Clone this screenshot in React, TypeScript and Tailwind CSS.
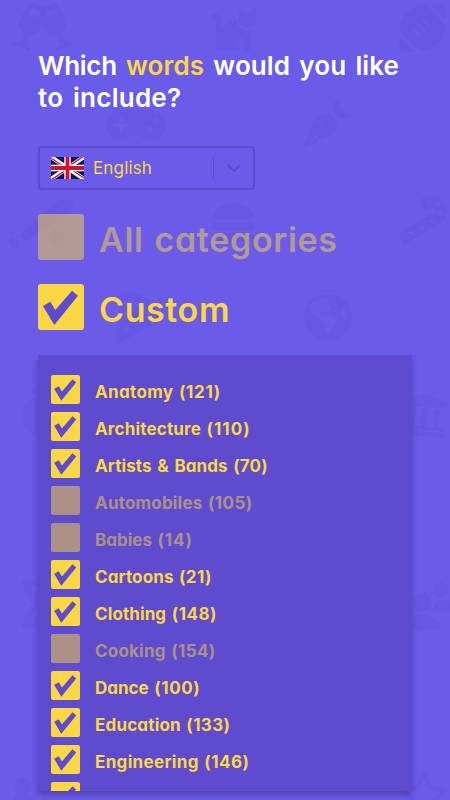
import React from 'react';
import {
  FaCandyCane,
  FaCarrot,
  FaCat,
  FaGamepad,
  FaGlassCheers,
  FaHamburger,
  FaHourglassHalf,
  FaPizzaSlice,
  FaRegStar,
  FaUniversity,
} from 'react-icons/fa';
import clsx from 'clsx';

interface Category {
  name: string;
  count: number;
  checked: boolean;
  nameClass: string;
  countClass: string;
}

const categories: Category[] = [
  { name: 'Anatomy', count: 121, checked: true, nameClass: 'tracking-[0.35px]', countClass: 'tracking-[0.7px]' },
  { name: 'Architecture', count: 110, checked: true, nameClass: 'tracking-[0.17px]', countClass: 'tracking-[1px]' },
  { name: 'Artists & Bands', count: 70, checked: true, nameClass: 'tracking-[0.1px] [word-spacing:1.5px]', countClass: 'tracking-[0.2px]' },
  { name: 'Automobiles', count: 105, checked: false, nameClass: 'tracking-[0.2px]', countClass: 'tracking-[0.4px]' },
  { name: 'Babies', count: 14, checked: false, nameClass: 'tracking-[0px]', countClass: 'tracking-[0.9px]' },
  { name: 'Cartoons', count: 21, checked: true, nameClass: 'tracking-[0.12px]', countClass: 'tracking-[0.4px]' },
  { name: 'Clothing', count: 148, checked: true, nameClass: 'tracking-[0.1px]', countClass: 'tracking-[0.5px]' },
  { name: 'Cooking', count: 154, checked: false, nameClass: 'tracking-[0.2px]', countClass: 'tracking-[0.4px]' },
  { name: 'Dance', count: 100, checked: true, nameClass: 'tracking-[0px]', countClass: 'tracking-[0.6px]' },
  { name: 'Education', count: 133, checked: true, nameClass: 'tracking-[0.18px]', countClass: 'tracking-[0.4px]' },
  { name: 'Engineering', count: 146, checked: true, nameClass: 'tracking-[0.33px]', countClass: 'tracking-[0.5px]' },
  { name: 'Food & Drink', count: 120, checked: true, nameClass: 'tracking-[0.8px]', countClass: 'tracking-[0.5px]' },
];

function Checkbox({ checked, className }: { checked: boolean; className: string }) {
  return (
    <span className={clsx('block shrink-0 bg-[#fad744]', className)}>
      {checked && (
        <svg viewBox="0 0 46 46" className="block h-full w-full">
          <path d="M5 22 12.3 17.7 17.3 26 34 6.7 40 11.7 16.3 41Z" fill="#5e4bce" />
        </svg>
      )}
    </span>
  );
}

function UnionJack() {
  return (
    <svg viewBox="0 0 33 22" className="h-[22px] w-[33px] shrink-0">
      <clipPath id="flag">
        <path d="M0 0h33v22H0z" />
      </clipPath>
      <g clipPath="url(#flag)">
        <path d="M0 0h33v22H0z" fill="#06175f" />
        <path d="M0 0 33 22M33 0 0 22" stroke="#fff" strokeWidth="4.2" />
        <path d="M0 1 16.5 12M33 21 16.5 10M33 -1 16.5 10M0 23 16.5 12" stroke="#d0142c" strokeWidth="1.4" />
        <path d="M16.5 0v22M0 11h33" stroke="#fff" strokeWidth="6.4" />
        <path d="M16.5 0v22M0 11h33" stroke="#d0142c" strokeWidth="3.8" />
      </g>
    </svg>
  );
}

function Football({ className }: { className: string }) {
  return (
    <svg viewBox="0 0 48 48" className={className} fill="currentColor">
      <path d="M1 27C0 14 10 2 27 1L46 20C47 32 38 45 21 47Z" />
      <path d="M31 0Q40 -1 46 2Q48 8 47 16Z" />
      <path d="M0 32 16 47Q8 49 1 47Q-1 40 0 32Z" />
      <path d="M23 15 32 23M18 20 27 28M14 25 22 33" stroke="#6a5be9" strokeWidth="2.4" />
    </svg>
  );
}

function BaseballBat({ className }: { className: string }) {
  return (
    <svg viewBox="0 0 70 56" className={className} fill="currentColor">
      <path d="M13 41 54 6C59 2 68 6 67 13Q67 18 62 21L20 47Z" />
      <rect x="2" y="45" width="12" height="8" rx="3" transform="rotate(50 8 49)" />
      <circle cx="51" cy="45" r="8" />
    </svg>
  );
}

function Globe({ className }: { className: string }) {
  return (
    <svg viewBox="0 0 144 138" className={className}>
      <ellipse cx="72" cy="69" rx="72" ry="69" fill="currentColor" />
      <path
        d="M16 43Q22 26 33 20Q48 11 63 11Q76 11 75 16L70 30Q76 40 84 48Q72 56 53 53Q48 58 52 63L68 63Q84 66 93 73Q102 78 97 86L81 108Q74 124 68 119Q62 114 60 90Q52 76 43 71Q24 66 16 43Z"
        fill="#6a5be9"
      />
      <path d="M113 43Q121 40 126 50Q133 66 127 75Q120 78 114 67Q108 54 113 43Z" fill="#6a5be9" />
    </svg>
  );
}

function People({ className }: { className: string }) {
  return (
    <svg viewBox="0 0 52 50" className={className} fill="currentColor">
      <circle cx="24" cy="22" r="9.5" />
      <circle cx="42.5" cy="10" r="7.5" />
      <path d="M2 50C2 40 12 35 24 35S42 42 42 50Z" />
      <path d="M35 31Q35 20 44 20Q52 20 56 24V31Z" />
    </svg>
  );
}

/* Faint icons scattered over the page background */
function Doodles() {
  return (
    <div className="absolute inset-0 text-[#6658e3]">
      <FaGlassCheers className="absolute left-[13px] top-[3px] h-[48px] w-[60px]" />
      <FaCat className="absolute left-[208px] top-[4px] h-[46px] w-[50px]" />
      <Football className="absolute left-[399px] top-[4px] h-[48px] w-[48px]" />
      <FaGamepad className="absolute left-[106px] top-[95px] h-[60px] w-[60px]" />
      <FaCarrot className="absolute left-[303px] top-[100px] h-[48px] w-[48px]" />
      <BaseballBat className="absolute left-[6px] top-[194px] h-[56px] w-[70px]" />
      <FaHamburger className="absolute left-[211px] top-[200px] h-[44px] w-[44px]" />
      <FaCandyCane className="absolute left-[399px] top-[195px] h-[49px] w-[48px]" />
      <FaPizzaSlice className="absolute left-[111px] top-[290px] h-[49px] w-[49px] -rotate-12" />
      <Globe className="absolute left-[304px] top-[294px] h-[46px] w-[48px]" />
      <svg viewBox="0 0 46 52" className="absolute left-[20px] top-[385px] h-[52px] w-[46px]" fill="currentColor">
        <circle cx="22" cy="31" r="20" />
        <circle cx="16" cy="6" r="4" />
      </svg>
      <FaUniversity className="absolute left-[400px] top-[390px] h-[49px] w-[49px] rotate-6" />
      <FaHourglassHalf className="absolute left-[20px] top-[580px] h-[48px] w-[40px]" />
      <People className="absolute left-[398px] top-[580px] h-[50px] w-[52px]" />
      <svg viewBox="0 0 24 32" className="absolute left-[11px] top-[778px] h-[32px] w-[24px]" fill="currentColor">
        <circle cx="12" cy="8" r="8" />
        <path d="M0 30Q2 12 12 14T24 30Z" />
      </svg>
      <FaRegStar className="absolute left-[399px] top-[770px] h-[50px] w-[50px]" />
    </div>
  );
}

export default function App() {
  return (
    <div className="relative h-[800px] w-[450px] overflow-hidden bg-[#6a5be9] font-['Inter',sans-serif] [font-feature-settings:'cv11']">
      <Doodles />
      <main className="relative flex h-full flex-col items-start pl-[38px] pt-[49px]">
        <h1 className="text-[26px] font-semibold leading-[33px] text-white">
          <span className="block whitespace-nowrap tracking-[0.1px] [word-spacing:2.6px]">
            <span className="tracking-[-0.3px]">Which</span> <span className="text-[#fad744]">words</span> would you like
          </span>
          <span className="-mt-px block whitespace-nowrap tracking-[0.25px] [word-spacing:3px]">to include?</span>
        </h1>

        <div className="mt-[32px] flex h-[44px] w-[217px] items-center rounded-[4px] border-2 border-[#5e4bce] pl-[11px] text-[#fad744]">
          <UnionJack />
          <span className="ml-[9px] pt-px text-[17px] tracking-[0.15px]">English</span>
          <span className="ml-auto h-[22px] w-px bg-[#5e4bce]" />
          <svg viewBox="0 0 14 9" className="mx-[12.5px] h-[9px] w-[14px]" fill="none" stroke="#5e4bce" strokeWidth="2" strokeLinecap="round">
            <path d="M1.5 1.5 7 7 12.5 1.5" />
          </svg>
        </div>

        <div className="mt-[24px] flex h-[46px] items-center gap-[15px] text-[34px] font-semibold text-[#fad744] opacity-50">
          <Checkbox checked={false} className="h-[46px] w-[46px] rounded-[3px]" />
          <span className="whitespace-nowrap pt-[4px] tracking-[0.7px] [word-spacing:1.5px]">All categories</span>
        </div>
        <div className="mt-[24px] flex h-[46px] items-center gap-[15px] text-[34px] font-semibold text-[#fad744]">
          <Checkbox checked className="h-[46px] w-[46px] rounded-[3px]" />
          <span className="whitespace-nowrap pt-[4px] tracking-[0.6px]">Custom</span>
        </div>

        <div className="mt-[25px] h-[436px] w-[374px] shrink-0 bg-[#5e4bce] shadow-[0_4px_6px_rgba(0,0,0,0.25)]">
          <ul className="flex h-full flex-col gap-[8px] overflow-hidden pl-[13px] pt-[20px]">
            {categories.map(({ name, count, checked, nameClass, countClass }) => (
              <li
                key={name}
                className={clsx('flex h-[29px] shrink-0 items-center text-[#fad744]', !checked && 'opacity-50')}
              >
                <Checkbox checked={checked} className="h-[29px] w-[29px] rounded-[2px]" />
                <p className="flex gap-[5.5px] whitespace-nowrap pl-[15px] pt-[4px] text-[17px] font-bold leading-6">
                  <span className={nameClass}>{name}</span>
                  <span className={countClass}>({count})</span>
                </p>
              </li>
            ))}
          </ul>
        </div>
      </main>
    </div>
  );
}
